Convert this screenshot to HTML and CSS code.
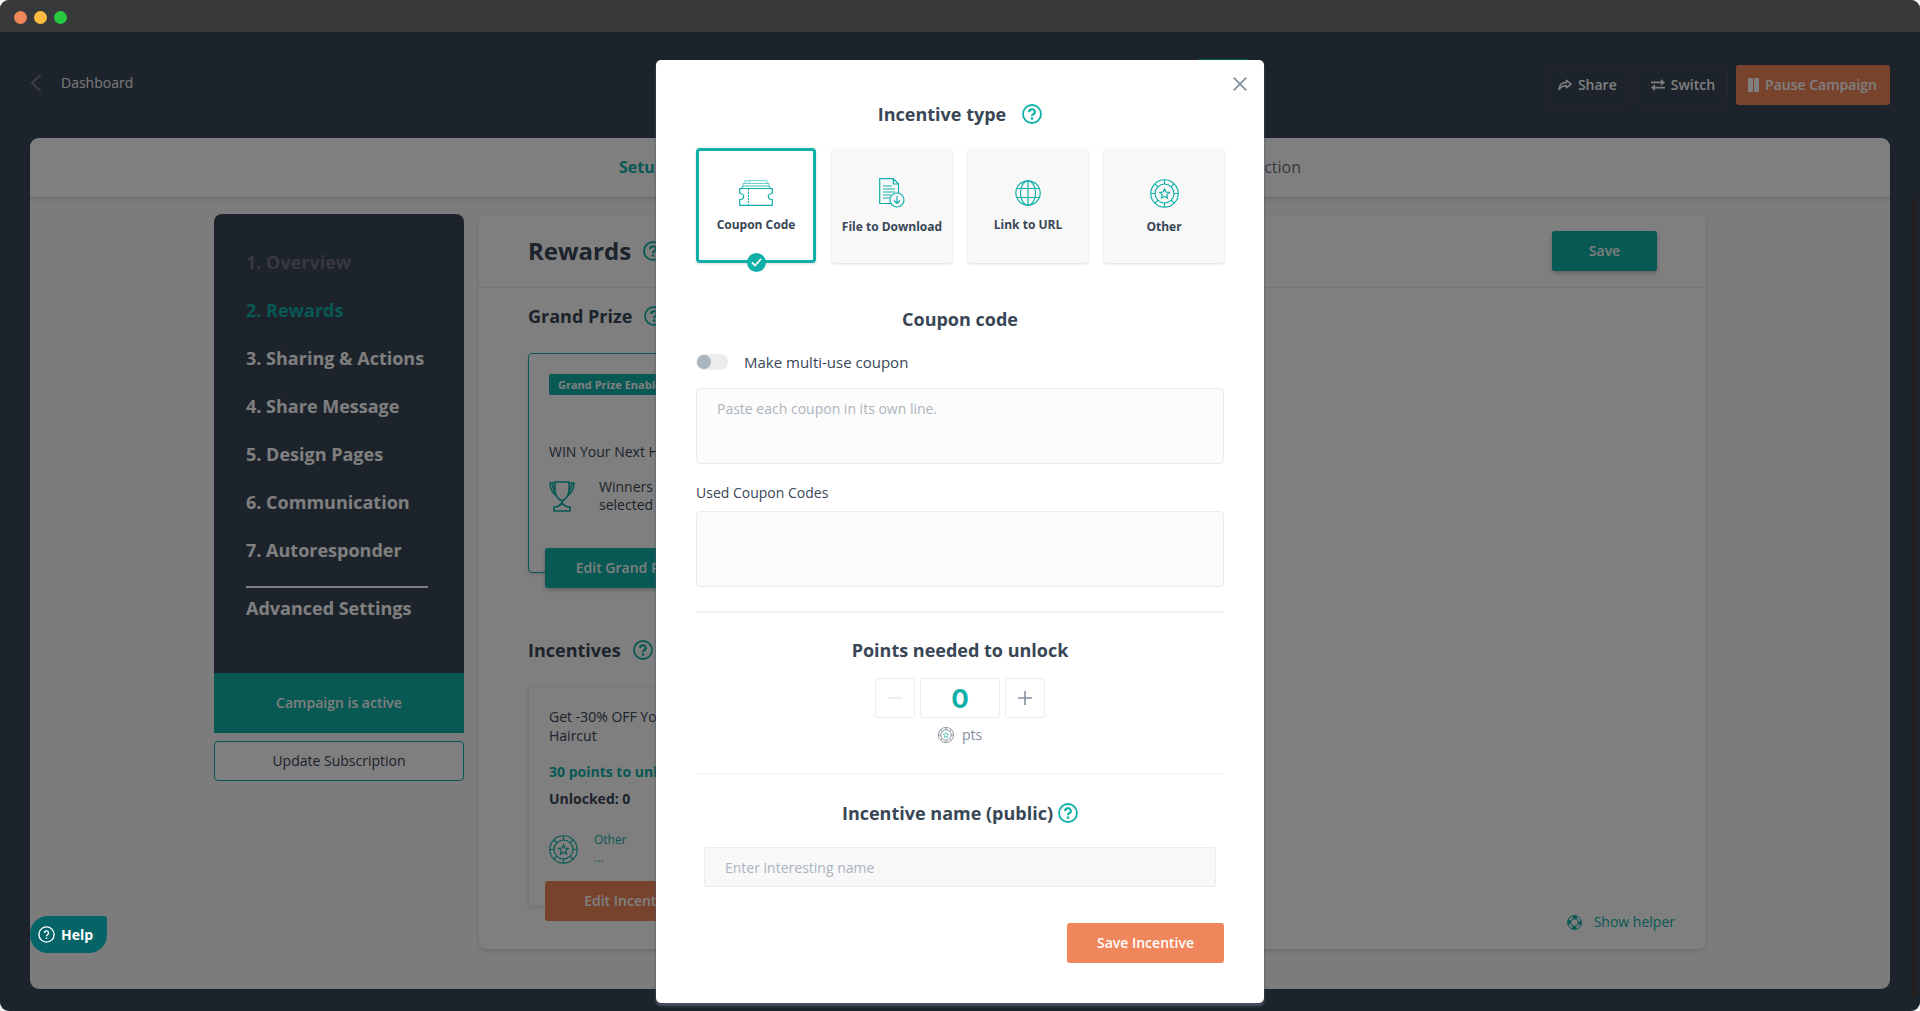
FILE: index.html
```html
<!DOCTYPE html>
<html lang="en">
<head>
<meta charset="utf-8">
<title>Rewards</title>
<link rel="stylesheet" href="styles.css">
</head>
<body>
<svg class="sprite" aria-hidden="true">
  <symbol id="help" viewBox="0 0 20 20">
    <circle cx="10" cy="10" r="9" fill="none" stroke="currentColor" stroke-width="1.8"/>
    <path d="M7.2 8.1a2.8 2.6 0 1 1 4.3 2c-1 .7-1.5 1-1.5 2.1" fill="none" stroke="currentColor" stroke-width="2.1"/>
    <circle cx="10" cy="14.6" r="1.3" fill="currentColor"/>
  </symbol>
  <symbol id="chip" viewBox="0 0 30 30">
    <g fill="none" stroke="currentColor" stroke-width="1.2">
      <circle cx="15" cy="15" r="14.2"/>
      <circle cx="15" cy="15" r="9.8"/>
      <path d="M15 1v4.2M15 24.800v4.200M1 15h4.200M24.800 15H29M5.200 5.200l3 3M21.800 21.800l3 3M24.800 5.200l-3 3M8.200 21.800l-3 3"/>
      <path class="star" d="m15 10.200 1.500 3.200 3.500.400-2.600 2.400.700 3.500-3.100-1.800-3.100 1.800.700-3.500-2.600-2.400 3.500-.400z"/>
    </g>
  </symbol>
</svg>

<div class="window">
  <header class="titlebar"><span class="dot red"></span><span class="dot amber"></span><span class="dot green"></span></header>

  <div class="app">
    <div class="topbar">
      <a class="back" href="#">
        <svg width="12" height="18" viewBox="0 0 12 18" fill="none" stroke="#6f7280" stroke-width="2.500"><path d="M10.500 1 2 9l8.500 8"/></svg>
        Dashboard
      </a>
      <div class="actions">
        <button class="ghost">
          <svg width="14" height="12" viewBox="0 0 15 12" fill="none" stroke="currentColor" stroke-width="1.600" stroke-linejoin="round"><path d="M9 1l5 4-5 4V6.700C5 6.500 3 7.500 1.200 11 1 6 4 3.200 9 3.200z"/></svg>
          Share
        </button>
        <button class="ghost">
          <svg width="14" height="12" viewBox="0 0 14 12" fill="currentColor"><path d="M0 2.500h10V0l4 3.400-4 3.400V4.300H0zM14 7.700H4V5.200L0 8.600 4 12V9.500h10z"/></svg>
          Switch
        </button>
        <button class="pause">
          <svg width="11" height="14" viewBox="0 0 11 14" fill="currentColor"><rect width="5" height="14" rx="1"/><rect x="6" width="5" height="14" rx="1"/></svg>
          Pause Campaign
        </button>
      </div>
    </div>

    <main class="panel">
      <nav class="tabs"><a class="current" href="#">Setup</a><a href="#">Action</a></nav>
      <div class="columns">
        <aside class="side">
          <nav class="steps">
            <a class="muted" href="#">1. Overview</a>
            <a class="active" href="#">2. Rewards</a>
            <a href="#">3. Sharing &amp; Actions</a>
            <a href="#">4. Share Message</a>
            <a href="#">5. Design Pages</a>
            <a href="#">6. Communication</a>
            <a href="#">7. Autoresponder</a>
            <hr>
            <a href="#">Advanced Settings</a>
          </nav>
          <div class="status">Campaign is active</div>
          <div class="subscription"><button>Update Subscription</button></div>
        </aside>

        <section class="content">
          <div class="content-head">
            <h1>Rewards <svg class="help-icon"><use href="#help"/></svg></h1>
            <button class="save">Save</button>
          </div>
          <div class="content-body">
            <h2>Grand Prize <svg class="help-icon"><use href="#help"/></svg></h2>
            <article class="card prize">
              <span class="tag">Grand Prize Enabled</span>
              <p class="prize-name">WIN Your Next Haircut</p>
              <div class="winners">
                <svg width="26" height="31" viewBox="0 0 26 31" fill="none" stroke="#10b0a8" stroke-width="1.600"><path d="M6 1h14v8c0 6-3 9-7 11-4-2-7-5-7-11zM6 2H1c0 6 2 10 7 13M20 2h5c0 6-2 10-7 13M3 2c1 5 2 8 4 10M23 2c-1 5-2 8-4 10M13 20c0 4-3 5-6 6h-2v4h16v-4h-2c-3-1-6-2-6-6"/></svg>
                <p>Winners will be selected</p>
              </div>
              <button class="edit teal">Edit Grand Prize</button>
            </article>
            <h2 class="incentives-title">Incentives <svg class="help-icon"><use href="#help"/></svg></h2>
            <article class="card incentive">
              <p class="incentive-name">Get -30% OFF Your Next Haircut</p>
              <p class="points">30 points to unlock</p>
              <p class="unlocked">Unlocked: 0</p>
              <div class="kind"><svg width="29" height="29"><use href="#chip"/></svg><p>Other<br>...</p></div>
              <button class="edit orange">Edit Incentive</button>
            </article>
          </div>
          <a class="helper" href="#">
            <svg width="15" height="15" viewBox="0 0 15 15" fill="none" stroke="currentColor"><circle cx="7.500" cy="7.500" r="6.800"/><circle cx="7.500" cy="7.500" r="3.800"/><circle cx="7.500" cy="7.500" r="5.400" stroke-width="3.400" stroke-dasharray="4.240 4.240" stroke-dashoffset="2.120"/></svg>
            Show helper
          </a>
        </section>
      </div>
    </main>
    <span class="scrollbar"></span>

    <div class="overlay">
      <form class="modal" role="dialog" aria-labelledby="modal-title">
        <button type="button" class="close" aria-label="Close"><svg width="14" height="14" viewBox="0 0 14 14" stroke="currentColor" stroke-width="1.800"><path d="M.700.700l12.600 12.600M13.300.700.700 13.300"/></svg></button>
        <h2 id="modal-title" class="wide">Incentive type <svg class="help-icon"><use href="#help"/></svg></h2>

        <div class="types">
          <button type="button" class="type selected">
            <svg width="34" height="26" viewBox="0 0 34 26" fill="none" stroke="currentColor"><g opacity=".6"><path d="M6 3.500V.700h22v2.800M4 6V3.500h26V6M9.500 3.500 11 .700"/></g><path d="M2 8.500 4 6h26l2 2.500" opacity=".8"/><path d="M.700 8.500h32.600v5c-2.500 0-4 1-4 3s1.500 3 4 3v5.800H.700v-5.800c2.500 0 4-1 4-3s-1.500-3-4-3z" stroke-width="1.200"/><path d="M9.500 9v16" stroke-dasharray="2 1"/></svg>
            Coupon Code
            <span class="check"><svg width="11" height="9" viewBox="0 0 11 9" fill="none" stroke="#fff" stroke-width="1.800"><path d="m1 4.500 3 3L10 1"/></svg></span>
          </button>
          <button type="button" class="type">
            <svg width="26" height="30" viewBox="0 0 26 30" fill="none" stroke="currentColor" stroke-width="1.200"><path d="M12 25.500H.700V.700h13.600L19.500 6v9M14.300.700V6h5.200M4 8h9M4 11h12M4 14h12M4 17h8M4 20h7"/><circle cx="18" cy="22" r="7"/><path d="M18 18v7M15 22.500l3 3 3-3"/></svg>
            File to Download
          </button>
          <button type="button" class="type">
            <svg width="26" height="26" viewBox="0 0 26 26" fill="none" stroke="currentColor" stroke-width="1.200"><circle cx="13" cy="13" r="12.200"/><ellipse cx="13" cy="13" rx="7.500" ry="12.200"/><path d="M13 1v24M2 8.500h22M2 17.500h22"/></svg>
            Link to URL
          </button>
          <button type="button" class="type">
            <svg width="29" height="29"><use href="#chip"/></svg>
            Other
          </button>
        </div>

        <h2>Coupon code</h2>
        <label class="multi"><input type="checkbox" class="switch">Make multi-use coupon</label>
        <textarea aria-label="Coupon codes" placeholder="Paste each coupon in its own line."></textarea>
        <label class="used" for="used">Used Coupon Codes</label>
        <textarea id="used"></textarea>

        <hr class="thick">
        <h2>Points needed to unlock</h2>
        <div class="stepper">
          <button type="button" disabled aria-label="Fewer points"><svg width="14" height="14" viewBox="0 0 14 14" stroke="currentColor" stroke-width="1.600"><path d="M0 7h14"/></svg></button>
          <input type="text" value="0" aria-label="Points needed to unlock">
          <button type="button" aria-label="More points"><svg width="14" height="14" viewBox="0 0 14 14" stroke="currentColor" stroke-width="1.600"><path d="M0 7h14M7 0v14"/></svg></button>
        </div>
        <p class="pts"><svg width="16" height="16"><use href="#chip"/></svg>pts</p>

        <hr>
        <h2 class="name-title"><label for="name">Incentive name (public)</label> <svg class="help-icon"><use href="#help"/></svg></h2>
        <input id="name" class="name" type="text" placeholder="Enter interesting name">
        <button type="button" class="submit">Save Incentive</button>
      </form>
    </div>

    <button class="help-button">
      <svg width="17" height="17" viewBox="0 0 17 17" fill="none" stroke="currentColor" stroke-width="1.400"><circle cx="8.500" cy="8.500" r="7.600"/><path d="M6.400 7a2.100 2 0 1 1 3.200 1.600c-.800.500-1.100.800-1.100 1.600M8.500 11.600v1.500"/></svg>
      Help
    </button>
  </div>
</div>
</body>
</html>
```
FILE: styles.css
```css
* { box-sizing: border-box; }
body { margin: 0; background: #f4f4f4; color: #384656; font: 14px/20px "Open Sans", sans-serif; }
h1, h2, p { margin: 0; }
a { color: inherit; text-decoration: none; }
button, input, textarea { font: inherit; color: inherit; }
button { display: flex; align-items: center; justify-content: center; padding: 0; border: 0; background: none; border-radius: 3px; font-weight: 600; }
svg { flex: none; display: block; }
hr { margin: 0; border: 0; }
h2 { display: flex; align-items: center; font-size: 18px; line-height: 24px; font-weight: 700; }
.sprite { position: absolute; width: 0; height: 0; }
.help-icon { width: 20px; height: 20px; color: #10b0a8; }

.window { display: flex; flex-direction: column; min-height: 100vh; border-radius: 9px; overflow: hidden; background: #384656; }
.titlebar { display: flex; align-items: center; gap: 7px; height: 32px; padding: 2px 14px 0; background: #38393a; }
.dot { width: 13px; height: 13px; border-radius: 50%; }
.red { background: #f0865b; }
.amber { background: #fdbc40; }
.green { background: #28c840; }

.app { position: relative; flex: 1; display: flex; flex-direction: column; padding: 0 30px 22px; }
.topbar { display: flex; justify-content: space-between; align-items: flex-start; height: 106px; padding-top: 33px; }
.back { display: flex; align-items: center; gap: 19px; height: 36px; color: #f4f4f4; }
.actions { display: flex; gap: 8px; color: #fff; }
.actions button { height: 40px; gap: 6px; }
.ghost { padding: 0 12px; border: 1px solid #4e4a5e; }
.actions .pause { padding: 0 13px 0 12px; background: #f0865b; }

.panel { flex: 1; display: flex; flex-direction: column; border-radius: 9px; background: #f8f8f8; }
.tabs { display: flex; justify-content: space-between; height: 60px; padding: 0 589px; border-bottom: 1px solid #d8d8d8; border-radius: 9px 9px 0 0; background: #fff; box-shadow: 0 3px 4px rgba(0, 0, 0, .06); font-size: 16px; line-height: 58px; color: #6f7280; }
.tabs .current { color: #10b0a8; font-weight: 700; }
.columns { flex: 1; display: flex; gap: 15px; padding: 16px 184px 40px; }

.side { flex: none; align-self: flex-start; width: 250px; border-radius: 8px; overflow: hidden; }
.steps { display: flex; flex-direction: column; gap: 24px; padding: 36px 32px 53px; background: #384656; color: #fff; font-size: 18px; line-height: 24px; font-weight: 700; }
.steps .muted { color: #727080; }
.steps .active { color: #10b0a8; }
.steps hr { width: 182px; height: 2px; margin-bottom: -16px; background: #fff; }
.status { background: #10b0a8; color: #fff; font-weight: 600; line-height: 60px; text-align: center; }
.subscription { padding: 8px 0; border-radius: 0 0 8px 8px; }
.subscription button { width: 100%; height: 40px; border: 1px solid #10b0a8; border-radius: 4px; background: #fff; font-weight: 500; }

.content { flex: 1; display: flex; flex-direction: column; border-radius: 8px; background: #fff; box-shadow: 0 2px 4px rgba(0, 0, 0, .12); }
.content-head { display: flex; justify-content: space-between; align-items: center; height: 74px; padding: 0 49px; border-bottom: 1px solid #ececec; }
h1 { display: flex; align-items: center; gap: 12px; font-size: 24px; line-height: 32px; font-weight: 700; }
.save { width: 105px; height: 40px; background: #10b0a8; color: #fff; box-shadow: 0 2px 4px rgba(0, 0, 0, .25); }
.content-body { flex: 1; display: flex; flex-direction: column; align-items: flex-start; padding: 16px 49px 0; }
.content-body h2 { gap: 12px; }
.card { position: relative; width: 204px; height: 220px; padding: 20px; border: 1px solid #ececec; border-radius: 4px; box-shadow: 0 2px 4px rgba(0, 0, 0, .1); }
.prize { margin-top: 25px; border-color: #10b0a8; }
.tag { display: inline-block; padding: 0 9px; border-radius: 2px; background: #10b0a8; color: #fff; font-size: 11px; line-height: 21px; font-weight: 700; white-space: nowrap; }
.prize-name { margin-top: 47px; white-space: nowrap; }
.winners { display: flex; align-items: center; gap: 24px; margin-top: 16px; line-height: 18px; }
.edit { position: absolute; left: 16px; bottom: -16px; width: 170px; height: 40px; color: #fff; }
.teal { background: #10b0a8; box-shadow: 0 2px 4px rgba(0, 0, 0, .25); }
.orange { background: #f0865b; }
.incentives-title { margin-top: 65px; }
.incentive { margin-top: 24px; }
.incentive-name { line-height: 19px; }
.points { margin-top: 17px; color: #10b0a8; font-weight: 700; }
.unlocked { margin-top: 7px; font-weight: 700; }
.kind { display: flex; align-items: center; gap: 16px; margin-top: 22px; color: #10b0a8; font-size: 12px; line-height: 18px; }
.helper { align-self: flex-end; display: flex; align-items: center; gap: 12px; padding: 0 31px 17px 0; color: #10b0a8; }
.scrollbar { position: absolute; top: 166px; right: 3px; bottom: 14px; width: 5px; background: #463e40; }

.overlay { position: absolute; inset: 0; display: flex; justify-content: center; align-items: flex-start; padding-top: 28px; background: rgba(0, 0, 0, .5); }
.modal { position: relative; display: flex; flex-direction: column; align-items: center; width: 608px; padding: 42px 40px 40px; border-radius: 5px; background: #fff; box-shadow: 0 3px 3px #4a5464; }
.modal::before { content: ""; position: absolute; top: -1px; right: 16px; width: 50px; height: 1px; background: #085854; }
.close { position: absolute; top: 17px; right: 17px; color: #84909e; }
.wide { gap: 16px; }
.types { display: grid; grid-template-columns: repeat(4, minmax(0, 1fr)); gap: 16px; width: 100%; margin-top: 22px; }
.type { position: relative; flex-direction: column; gap: 10px; height: 115px; padding-top: 3px; border-radius: 4px; background: #f8f8f8; box-shadow: 0 1px 3px rgba(0, 0, 0, .16); color: #384656; font-size: 12px; line-height: 18px; font-weight: 700; white-space: nowrap; }
.type > svg { color: #10b0a8; }
.selected { border: 3px solid #10b0a8; background: #fff; }
.check { position: absolute; bottom: -12px; display: grid; place-items: center; width: 19px; height: 19px; border-radius: 50%; background: #10b0a8; }
.types + h2 { margin-top: 44px; }
.multi { display: flex; align-items: center; align-self: flex-start; gap: 16px; margin-top: 21px; font-size: 15px; }
.switch { appearance: none; display: block; width: 32px; height: 16px; margin: 0; padding: 1px; border-radius: 8px; background: #ececec; }
.switch::before { content: ""; display: block; width: 14px; height: 14px; border-radius: 50%; background: #acb4be; }
textarea { display: block; width: 100%; height: 76px; padding: 10px 20px; border: 1px solid #ececec; border-radius: 4px; background: #fcfcfc; resize: none; }
::placeholder { color: #acb4be; }
.multi + textarea { margin-top: 16px; }
.used { align-self: flex-start; margin: 19px 0 8px; }
.modal hr { width: 100%; height: 1px; margin: 28px 0 27px; background: #f0f0f0; }
.modal .thick { height: 2px; margin: 24px 0 25px; }
.stepper { display: flex; gap: 5px; margin-top: 16px; color: #84909e; }
.stepper button { width: 40px; height: 40px; border: 1px solid #ececec; }
.stepper button:disabled { color: #ececec; }
.stepper input { width: 80px; height: 40px; padding: 0; border: 1px solid #ececec; border-radius: 3px; color: #10b0a8; font: 700 26px/38px Inter, sans-serif; text-align: center; }
.pts { display: flex; align-items: center; gap: 8px; margin-top: 7px; color: #84909e; }
.pts svg { color: #5a6674; }
.star { stroke: #10b0a8; }
.name-title { gap: 5px; }
.name { width: 512px; height: 40px; margin-top: 22px; padding: 0 20px; border: 1px solid #ececec; border-radius: 3px; background: #f8f8f8; }
.submit { align-self: flex-end; width: 157px; height: 40px; margin-top: 36px; background: #f0865b; color: #fff; }

.help-button { position: absolute; left: 30px; bottom: 58px; gap: 6px; width: 77px; height: 37px; padding-right: 6px; border-radius: 18px 3px 18px 18px; background: #056468; color: #fff; font-weight: 700; }
```
